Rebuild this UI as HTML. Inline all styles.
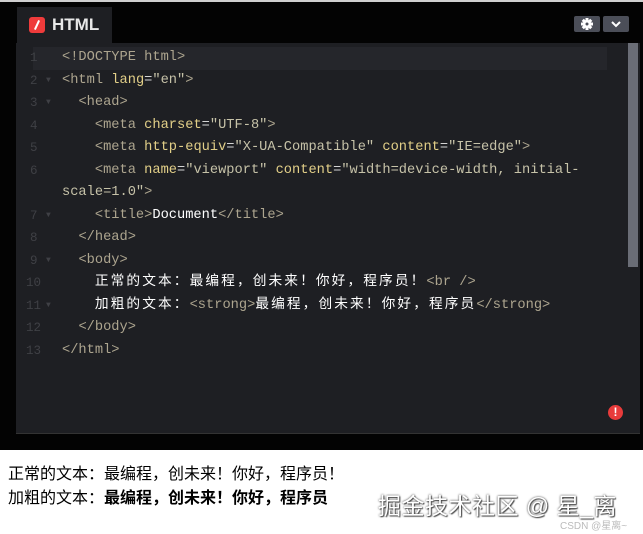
<!DOCTYPE html>
<html><head><meta charset="utf-8"><style>
*{margin:0;padding:0;box-sizing:border-box}
body{width:643px;height:534px;background:#fff;position:relative;overflow:hidden;font-family:"Liberation Sans","Noto Sans CJK SC",sans-serif}
#top{position:absolute;left:0;top:0;width:643px;height:450px;background:#030303;border-top:2px solid #cfcfcf}
#tab{position:absolute;left:17px;top:5px;width:95px;height:36px;background:#1e1f23}
#tab .ic{position:absolute;left:12px;top:10px;width:16px;height:16px;background:#ef3b3b;border-radius:3px}
#tab .ic:after{content:"";position:absolute;left:7px;top:3px;width:2px;height:10px;background:#fff;transform:rotate(25deg)}
#tab .t{position:absolute;left:35px;top:8px;color:#e8e8e8;font-weight:bold;font-size:17px}
.btn{position:absolute;top:14px;height:16px;background:#4b4e58;border-radius:2px}
#ed{position:absolute;left:16px;top:41px;width:624px;height:391px;background:#1e1f23;border-bottom:1px solid #333}
#hl{position:absolute;left:17px;top:4px;width:574px;height:23px;background:#25262b}
#sb{position:absolute;left:612px;top:0;width:10px;height:224px;background:#6a6d76}
.ln{position:absolute;left:0;height:22.5px;width:624px;font-family:"Liberation Mono","Noto Sans CJK SC",monospace;font-size:13.7px;line-height:22.5px;white-space:pre;color:#d4d4d4}
.n{position:absolute;left:14px;color:#3f4045;font-size:12.5px}
.f{position:absolute;left:30px;color:#3f4045;font-size:8px}
.c{position:absolute;left:46px}
.g{color:#ada58f}.a{color:#e2cf88}.s{color:#c6c2a8}.w{color:#fff}
.cj{letter-spacing:2.1px}
#err{position:absolute;left:608px;top:403px;width:15px;height:15px;border-radius:50%;background:#e83b3b;color:#fff;font-size:12px;font-weight:bold;text-align:center;line-height:15px}
.out{position:absolute;left:8px;font-size:16px;color:#000}
#wm{position:absolute;left:378px;top:487px;font-size:23px;color:#fff;text-shadow:0 0 2px #333,1px 1px 1px #555;letter-spacing:0.5px}
#csdn{position:absolute;left:560px;top:517px;font-size:10px;color:#bbb}
</style></head><body>
<div id="top">
<div id="tab"><div class="ic"></div><div class="t">HTML</div></div>
<div class="btn" style="left:574px;width:26px"><svg width="26" height="16"><g transform="translate(13,8)" fill="#fff"><circle r="4"/><rect x="-1.5" y="-6" width="3" height="12"/><rect x="-6" y="-1.5" width="12" height="3"/><rect x="-1.5" y="-6" width="3" height="12" transform="rotate(45)"/><rect x="-1.5" y="-6" width="3" height="12" transform="rotate(-45)"/><circle r="1.5" fill="#4b4e58"/></g></svg></div>
<div class="btn" style="left:603px;width:26px"><svg width="26" height="16"><path d="M9 6l4 4 4-4" stroke="#fff" stroke-width="2" fill="none"/></svg></div>
<div id="ed">
<div id="hl"></div><div id="sb"></div>
<div class="ln" style="top:4px"><span class="n">1</span><span class="c"><span class="g">&lt;!DOCTYPE html&gt;</span></span></div>
<div class="ln" style="top:26.5px"><span class="n">2</span><span class="f">▼</span><span class="c"><span class="g">&lt;html</span> <span class="a">lang</span>=<span class="s">"en"</span><span class="g">&gt;</span></span></div>
<div class="ln" style="top:49px"><span class="n">3</span><span class="f">▼</span><span class="c">  <span class="g">&lt;head&gt;</span></span></div>
<div class="ln" style="top:71.5px"><span class="n">4</span><span class="c">    <span class="g">&lt;meta</span> <span class="a">charset</span>=<span class="s">"UTF-8"</span><span class="g">&gt;</span></span></div>
<div class="ln" style="top:94px"><span class="n">5</span><span class="c">    <span class="g">&lt;meta</span> <span class="a">http-equiv</span>=<span class="s">"X-UA-Compatible"</span> <span class="a">content</span>=<span class="s">"IE=edge"</span><span class="g">&gt;</span></span></div>
<div class="ln" style="top:116.5px"><span class="n">6</span><span class="c">    <span class="g">&lt;meta</span> <span class="a">name</span>=<span class="s">"viewport"</span> <span class="a">content</span>=<span class="s">"width=device-width, initial-</span></span></div>
<div class="ln" style="top:139px"><span class="c"><span class="s">scale=1.0"</span><span class="g">&gt;</span></span></div>
<div class="ln" style="top:161.5px"><span class="n">7</span><span class="f">▼</span><span class="c">    <span class="g">&lt;title&gt;</span><span class="w">Document</span><span class="g">&lt;/title&gt;</span></span></div>
<div class="ln" style="top:184px"><span class="n">8</span><span class="c">  <span class="g">&lt;/head&gt;</span></span></div>
<div class="ln" style="top:206.5px"><span class="n">9</span><span class="f">▼</span><span class="c">  <span class="g">&lt;body&gt;</span></span></div>
<div class="ln" style="top:229px"><span class="n" style="left:10px">10</span><span class="c">    <span class="w cj">正常的文本：最编程，创未来！你好，程序员！</span><span class="g">&lt;br /&gt;</span></span></div>
<div class="ln" style="top:251.5px"><span class="n" style="left:10px">11</span><span class="f">▼</span><span class="c">    <span class="w cj">加粗的文本：</span><span class="g">&lt;strong&gt;</span><span class="w cj">最编程，创未来！你好，程序员</span><span class="g">&lt;/strong&gt;</span></span></div>
<div class="ln" style="top:274px"><span class="n" style="left:10px">12</span><span class="c">  <span class="g">&lt;/body&gt;</span></span></div>
<div class="ln" style="top:296.5px"><span class="n" style="left:10px">13</span><span class="c"><span class="g">&lt;/html&gt;</span></span></div>
</div>
<div id="err">!</div>
</div>
<div class="out" style="top:460px">正常的文本：最编程，创未来！你好，程序员！</div>
<div class="out" style="top:484px">加粗的文本：<b>最编程，创未来！你好，程序员</b></div>
<div id="wm">掘金技术社区 @ 星_离</div>
<div id="csdn">CSDN @星离~</div>
</body></html>
